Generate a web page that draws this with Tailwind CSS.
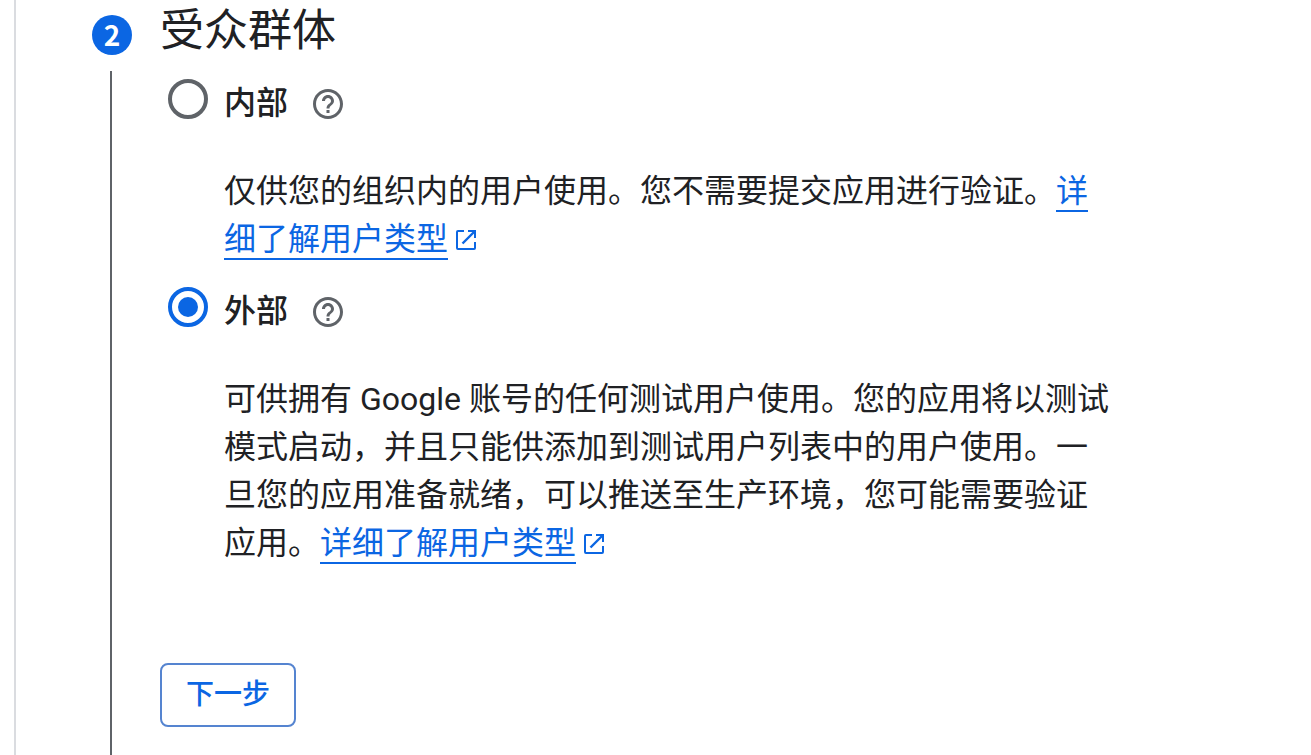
<!DOCTYPE html>
<html lang="zh-CN">
<head>
    <meta charset="UTF-8">
    <meta name="viewport" content="width=device-width, initial-scale=1.0">
    <title>受众群体</title>
    <script src="https://cdn.jsdelivr.net/npm/@tailwindcss/browser@4"></script>
</head>
<body class="bg-white text-[#202124] font-[Roboto,'Noto_Sans_CJK_SC',sans-serif]">
    <main class="ml-3.5 min-h-screen flex border-l-2 border-[#dadce0] pl-19">

        <!-- step marker -->
        <div class="w-10 shrink-0 flex flex-col pt-[15px]">
            <span class="w-10 h-10 rounded-full bg-[#0b66e3] text-white text-[28px] leading-[38px] font-bold text-center font-['Noto_Sans_CJK_SC',sans-serif]">2</span>
            <span class="w-0.5 grow mt-4 ml-[18px] bg-[#5f6368]"></span>
        </div>

        <section class="ml-7 grow">
            <h2 class="text-[44px] leading-[62px]">受众群体</h2>

            <form class="pt-[17px]">
                <div class="pl-2 flex items-start gap-4">
                    <input type="radio" id="internal" name="audience" class="appearance-none w-10 h-10 shrink-0 rounded-full border-4 border-[#5f6368] grid place-items-center checked:border-[#0b66e3] checked:before:content-[''] checked:before:w-5 checked:before:h-5 checked:before:rounded-full checked:before:bg-[#0b66e3]">
                    <div class="max-w-[888px]">
                        <div class="flex items-center gap-[25px] h-12">
                            <label for="internal" class="text-[32px] leading-12 font-medium">内部</label>
                            <button type="button" aria-label="帮助" class="mt-0.5 text-[#5f6368]">
                                <svg class="w-[30px] h-[30px]" viewBox="2 2 20 20" fill="currentColor"><path d="M11 18h2v-2h-2v2zm1-16C6.48 2 2 6.48 2 12s4.48 10 10 10 10-4.48 10-10S17.52 2 12 2zm0 18c-4.41 0-8-3.59-8-8s3.59-8 8-8 8 3.59 8 8-3.59 8-8 8zm0-14c-2.21 0-4 1.79-4 4h2c0-1.1.9-2 2-2s2 .9 2 2c0 2-3 1.75-3 5h2c0-2.25 3-2.5 3-5 0-2.21-1.79-4-4-4z"/></svg>
                            </button>
                        </div>
                        <p class="mt-10 text-[32px] leading-12">仅供您的组织内的用户使用。您不需要提交应用进行验证。<a href="#" class="text-[#0b66e3]"><span class="border-b-2">详细了解用户类型</span><svg class="inline-block align-baseline ml-2 w-5 h-5" viewBox="0 0 20 20" fill="none" stroke="currentColor" stroke-width="2"><path d="M8 1H2a1 1 0 0 0-1 1v16a1 1 0 0 0 1 1h16a1 1 0 0 0 1-1v-6M12 1h7v7"/><path stroke-width="2.4" d="M19 1 6.5 13.5"/></svg></a></p>
                    </div>
                </div>

                <div class="pl-2 mt-6 flex items-start gap-4">
                    <input type="radio" id="external" name="audience" checked class="appearance-none w-10 h-10 shrink-0 rounded-full border-4 border-[#5f6368] grid place-items-center checked:border-[#0b66e3] checked:before:content-[''] checked:before:w-5 checked:before:h-5 checked:before:rounded-full checked:before:bg-[#0b66e3]">
                    <div class="max-w-[888px]">
                        <div class="flex items-center gap-[25px] h-12">
                            <label for="external" class="text-[32px] leading-12 font-medium">外部</label>
                            <button type="button" aria-label="帮助" class="mt-0.5 text-[#5f6368]">
                                <svg class="w-[30px] h-[30px]" viewBox="2 2 20 20" fill="currentColor"><path d="M11 18h2v-2h-2v2zm1-16C6.48 2 2 6.48 2 12s4.48 10 10 10 10-4.48 10-10S17.52 2 12 2zm0 18c-4.41 0-8-3.59-8-8s3.59-8 8-8 8 3.59 8 8-3.59 8-8 8zm0-14c-2.21 0-4 1.79-4 4h2c0-1.1.9-2 2-2s2 .9 2 2c0 2-3 1.75-3 5h2c0-2.25 3-2.5 3-5 0-2.21-1.79-4-4-4z"/></svg>
                            </button>
                        </div>
                        <p class="mt-10 text-[32px] leading-12">可供拥有 Google 账号的任何测试用户使用。您的应用将以测试模式启动，并且只能供添加到测试用户列表中的用户使用。一旦您的应用准备就绪，可以推送至生产环境，您可能需要验证应用。<a href="#" class="text-[#0b66e3]"><span class="border-b-2">详细了解用户类型</span><svg class="inline-block align-baseline ml-2 w-5 h-5" viewBox="0 0 20 20" fill="none" stroke="currentColor" stroke-width="2"><path d="M8 1H2a1 1 0 0 0-1 1v16a1 1 0 0 0 1 1h16a1 1 0 0 0 1-1v-6M12 1h7v7"/><path stroke-width="2.4" d="M19 1 6.5 13.5"/></svg></a></p>
                    </div>
                </div>

                <button type="button" class="mt-24 mb-7 h-16 px-6 rounded-lg border-2 border-[#5584d0] text-[28px] leading-10 font-medium text-[#0b66e3]">下一步</button>
            </form>
        </section>

    </main>
</body>
</html>
